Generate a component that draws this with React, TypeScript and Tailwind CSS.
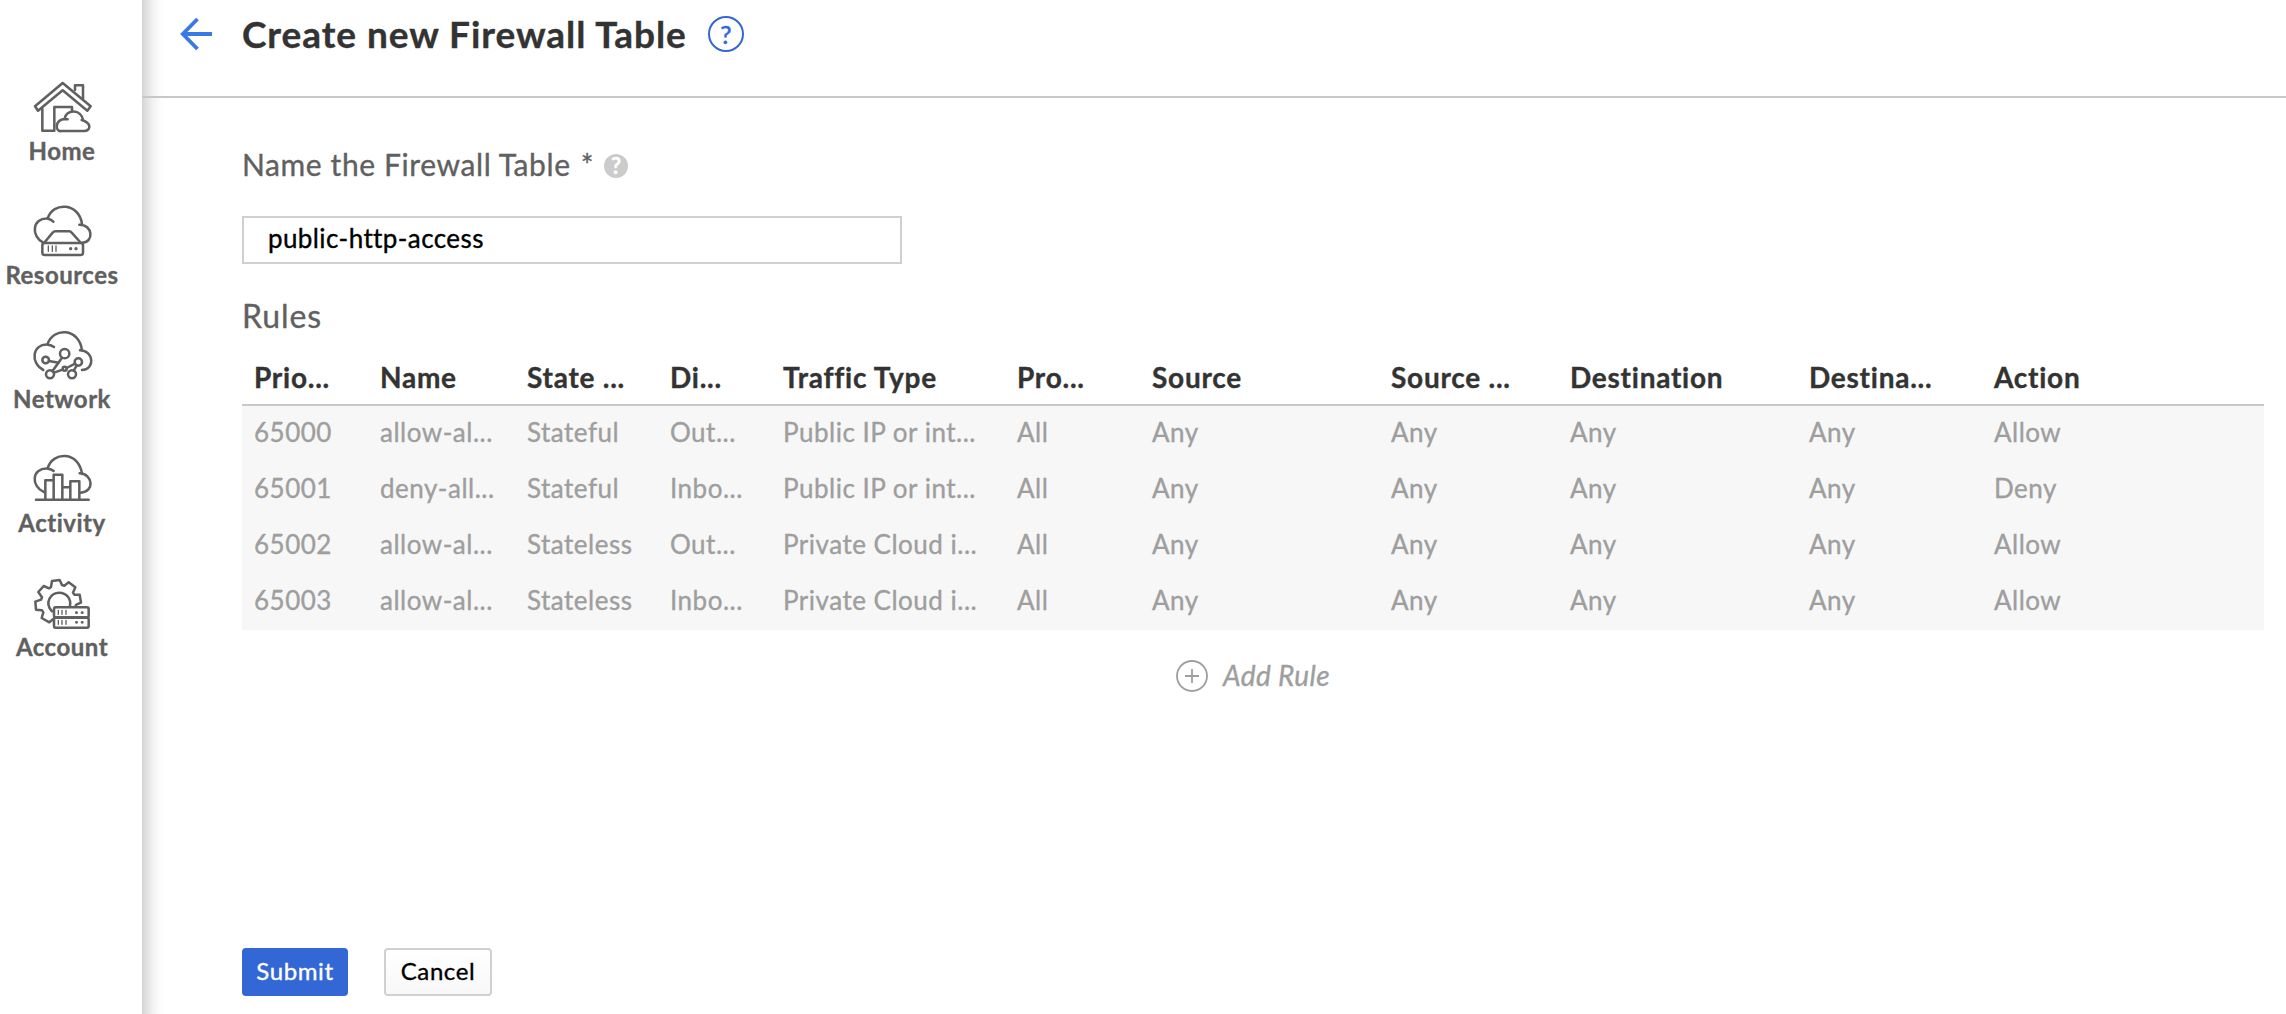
import React from "react";

const CLOUD = "M40 128C2 110 6 52 54 56Q64 58 70 65M53 56C68 4 148 8 156 72M148 74C190 74 192 128 156 128";

function HomeIcon() {
  return (
    <>
      <path d="M135 42V28H159V67M37 99V164H73V93H126V102" />
      <path d="M98 21L15 91L24 104L98 43L172 104L182 91Z" />
      <path d="M92 166C76 164 75 136 99 130Q107 129 113 130M103 130C108 98 154 98 160 134M155 132C184 140 184 163 164 165H90" />
    </>
  );
}

function ResourcesIcon() {
  return (
    <>
      <path d={CLOUD} />
      <path d="M42 129L68 98Q71 94 76 94H118Q122 94 125 98L153 129" />
      <rect x="37" y="129" width="122" height="36" rx="7" />
      <path strokeWidth="4" d="M55 138V154M67 138V154M78 138V154" />
      <circle cx="122" cy="146" r="3" fill="currentColor" strokeWidth="4" />
      <circle cx="138" cy="146" r="3" fill="currentColor" strokeWidth="4" />
    </>
  );
}

function NetworkIcon() {
  return (
    <>
      <path d="M40 138C0 118 6 58 54 62Q64 63 72 69M53 60C68 10 148 10 156 80M150 79C192 80 196 136 156 138" />
      <circle cx="104" cy="89" r="14" />
      <circle cx="47" cy="108" r="10" />
      <circle cx="145" cy="114" r="11" />
      <circle cx="60" cy="151" r="12" />
      <circle cx="126" cy="151" r="12" />
      <circle cx="104" cy="134" r="6" />
      <path d="M57 111L86 116M96 101L67 142M72 146L98 137M110 132L135 119M140 125L131 140" />
    </>
  );
}

function ActivityIcon() {
  return (
    <>
      <path d="M42 132C2 116 4 58 54 62Q64 63 71 69M53 61C68 8 148 10 156 78M149 76C190 78 194 132 152 134" />
      <path d="M18 155H176M46 154V97H69M71 154V80H97V154M99 118H120M121 154V100H148V154" />
    </>
  );
}

function AccountIcon() {
  return (
    <>
      <path d="M70 141L58 151L35 138L40 121L36 115L18 113L16 89L33 83L36 76L25 60L41 42L57 49L63 45L66 27L89 24L96 39L103 41L116 31L136 46L129 62L133 68L149 68L153 92L139 98L136 104" />
      <path d="M66 118C42 92 62 62 88 62C110 62 124 82 120 102" />
      <rect x="72" y="106" width="104" height="30" rx="5" />
      <rect x="72" y="137" width="104" height="30" rx="5" />
      <path strokeWidth="4" d="M85 115V127M96 115V127M108 115V127M85 145V157M96 145V157M108 145V157" />
      <path strokeWidth="8" d="M139 122H140M156 122H157M139 151H140M156 151H157" />
    </>
  );
}

const nav = [
  { label: "Home", Icon: HomeIcon },
  { label: "Resources", Icon: ResourcesIcon },
  { label: "Network", Icon: NetworkIcon },
  { label: "Activity", Icon: ActivityIcon },
  { label: "Account", Icon: AccountIcon },
];

const columns = ["Prio...", "Name", "State ...", "Di...", "Traffic Type", "Pro...", "Source", "Source ...", "Destination", "Destina...", "Action"];

const rows = [
  ["65000", "allow-al...", "Stateful", "Out...", "Public IP or int...", "All", "Any", "Any", "Any", "Any", "Allow"],
  ["65001", "deny-all...", "Stateful", "Inbo...", "Public IP or int...", "All", "Any", "Any", "Any", "Any", "Deny"],
  ["65002", "allow-al...", "Stateless", "Out...", "Private Cloud i...", "All", "Any", "Any", "Any", "Any", "Allow"],
  ["65003", "allow-al...", "Stateless", "Inbo...", "Private Cloud i...", "All", "Any", "Any", "Any", "Any", "Allow"],
];

const GRID = "grid grid-cols-[126px_147px_143px_113px_234px_135px_239px_179px_239px_185px_1fr] items-center whitespace-nowrap pl-3";

export default function App() {
  return (
    <div className="flex h-[1014px] w-[2286px] overflow-hidden bg-white font-[Lato,sans-serif] [-webkit-text-stroke:0.35px_currentColor]">
      <nav className="flex w-[142px] shrink-0 flex-col gap-[39px] pt-[76px] text-[#606060]">
        {nav.map(({ label, Icon }) => (
          <a key={label} className="flex w-[124px] flex-col items-center">
            <svg viewBox="0 0 192 192" className="size-16" fill="none" stroke="currentColor" strokeWidth="7.6" strokeLinecap="round" strokeLinejoin="round">
              <Icon />
            </svg>
            <span className="mt-px text-[24px] leading-[20px] font-bold tracking-[0.5px]">{label}</span>
          </a>
        ))}
      </nav>

      <main className="flex grow flex-col bg-[linear-gradient(to_right,#d4d4d4_0px,#e2e2e2_5px,#f2f2f2_11px,#fbfbfb_17px,#ffffff_24px)]">
        <header className="flex h-[98px] shrink-0 items-start border-b-2 border-[#c8c8c8] pl-[38px]">
          <div className="flex h-[68px] items-center">
            <svg viewBox="0 0 32 34" className="h-[34px] w-8" fill="none" stroke="#3b78e7" strokeWidth="3.8">
              <path d="M32 17H3M17.5 2L2.8 17L17.5 32" />
            </svg>
            <h1 className="ml-[30px] pb-0.5 text-[37px] leading-none font-bold tracking-[0.95px] text-[#333]">Create new Firewall Table</h1>
            <span className="ml-[21px] flex size-9 items-center justify-center rounded-full border-[2.5px] border-[#3367d6] text-[25px] leading-none font-medium text-[#3367d6]">?</span>
          </div>
        </header>

        <div className="flex grow flex-col pr-[22px] pb-[18px] pl-[100px]">
          <label className="mt-[51px] flex h-[30px] items-center text-[30px] leading-[30px] tracking-[0.6px] text-[#606060]">
            Name the Firewall Table
            <span className="ml-[10px]">*</span>
            <span className="mt-1 ml-[10px] flex size-6 items-center justify-center rounded-full bg-[#cbcbcb] text-[22px] leading-none font-bold tracking-normal text-white">?</span>
          </label>
          <div className="mt-[37px] flex h-12 w-[660px] items-center border-2 border-[#d0d0d0] pb-1 pl-6 text-[26px] leading-none tracking-[0.4px] text-black">
            public-http-access
          </div>
          <h2 className="mt-[36px] text-[32px] leading-[32px] tracking-[0.9px] text-[#606060]">Rules</h2>

          <div className={`${GRID} mt-[17px] h-[57px] border-b-2 border-[#c8c8c8] text-[28px] leading-[54px] font-bold tracking-[0.75px] text-[#333]`}>
            {columns.map((c, i) => (
              <span key={i}>{c}</span>
            ))}
          </div>
          <div className="bg-[#f7f7f7]">
            {rows.map((r) => (
              <div key={r[0]} className={`${GRID} h-14 pb-1 text-[26px] leading-none tracking-[0.5px] text-[#9e9e9e]`}>
                {r.map((c, i) => (
                  <span key={i}>{c}</span>
                ))}
              </div>
            ))}
          </div>

          <button className="mt-[30px] flex h-8 items-center justify-center gap-[15px] text-[28px] leading-none tracking-[0.4px] text-[#9e9e9e] italic">
            <svg viewBox="0 0 32 32" className="size-8" fill="none" stroke="currentColor" strokeWidth="1.8">
              <circle cx="16" cy="16" r="15" />
              <path d="M16 9V23M9 16H23" />
            </svg>
            <span className="-mt-0.5">Add Rule</span>
          </button>

          <div className="mt-auto flex gap-9 text-[24px] leading-none tracking-[0.6px]">
            <button className="flex h-12 w-[106px] items-center justify-center rounded-[4px] bg-[#3367d6] pb-0.5 text-white">Submit</button>
            <button className="flex h-12 w-[108px] items-center justify-center rounded-[4px] border-2 border-[#d0d0d0] bg-linear-to-b from-white to-[#f8f8f8] pb-0.5 text-black">Cancel</button>
          </div>
        </div>
      </main>
    </div>
  );
}
